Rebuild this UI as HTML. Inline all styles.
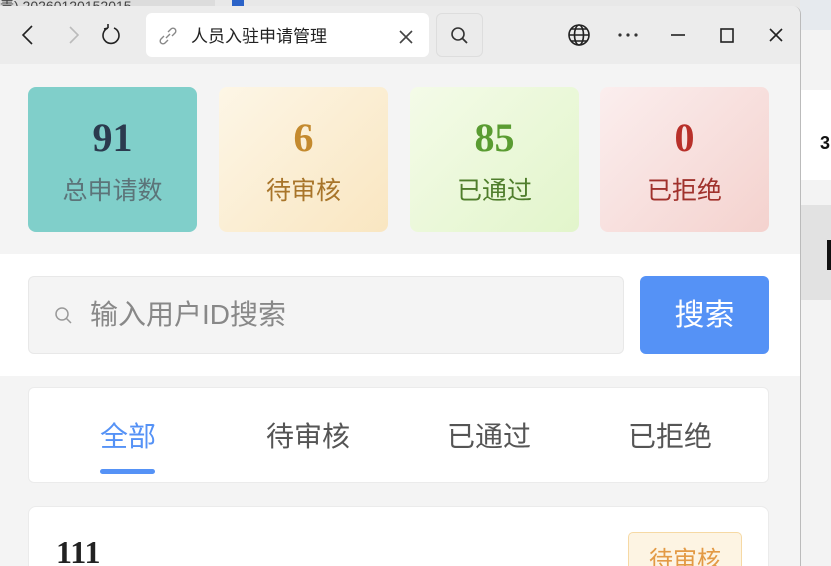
<!DOCTYPE html><html><head><meta charset="utf-8"><style>
*{margin:0;padding:0;box-sizing:border-box}
html{overflow:hidden;width:831px;height:566px}
body{width:831px;height:566px;overflow:hidden;background:#e8e8e8;font-family:"Liberation Sans","Noto Sans CJK SC",sans-serif;position:relative}
.a{position:absolute}
.cj{font-family:"Liberation Sans","Noto Sans CJK SC",sans-serif}
.num{font-family:"Liberation Serif","Noto Serif CJK SC",serif;font-weight:bold}
.card{position:absolute;top:87px;width:169px;height:145px;border-radius:8px;text-align:center}
.card .n{position:absolute;left:0;right:0;font-size:40px;line-height:1;top:31px}
.card .l{position:absolute;left:0;right:0;top:88px;font-size:25px;line-height:32px}
.tab{position:absolute;top:418px;font-size:28px;line-height:38px;color:#555;transform:translateX(-50%)}
</style></head><body>
<div class="a" style="left:0;top:0;width:215px;height:12px;background:#dcdcdc;color:#444;font-size:14px;line-height:12px;overflow:hidden">责) 20260120152015</div>
<div class="a" style="left:232px;top:0;width:12px;height:8px;background:#2b63c8"></div>
<div class="a" style="left:800px;top:0;width:31px;height:566px;background:#f3f3f3"></div>
<div class="a" style="left:800px;top:0;width:31px;height:30px;background:#e6eaee"></div>
<div class="a" style="left:800px;top:90px;width:31px;height:90px;background:#fff"></div>
<div class="a" style="left:820px;top:133px;font-size:18px;font-weight:bold;color:#111">3</div>
<div class="a" style="left:800px;top:205px;width:31px;height:95px;background:#e2e2e2"></div>
<div class="a" style="left:827px;top:240px;width:4px;height:30px;background:#111"></div>
<div class="a" style="left:0;top:6px;width:801px;height:560px;background:#f4f4f4;border-radius:0 8px 0 0;border-right:1px solid #bbb;overflow:hidden">
 <div class="a" style="left:0;top:0;width:800px;height:58px;background:#ececec"></div>
</div>
<svg class="a" style="left:0;top:0" width="800" height="64">
 <g fill="none" stroke="#222" stroke-width="1.6">
 <path d="M32 26 L23 35 L32 44"/>
 <path d="M70 27 L78 35 L70 43" stroke="#bbb"/>
 <path d="M108 28 A8 8 0 1 0 114 28 M108 28 L108 24 M108 28 L104 29"/>
 <circle cx="579" cy="35" r="10"/><ellipse cx="579" cy="35" rx="4.5" ry="10"/><path d="M569 35 H589 M571 29 H587 M571 41 H587"/>
 <path d="M671 35 H685"/><rect x="721" y="29" width="12" height="13"/><path d="M770 29 L782 41 M782 29 L770 41"/>
 </g>
 <g fill="#333"><circle cx="620" cy="35" r="1.6"/><circle cx="628" cy="35" r="1.6"/><circle cx="636" cy="35" r="1.6"/></g>
</svg>
<div class="a" style="left:146px;top:13px;width:283px;height:44px;background:#fff;border-radius:6px"></div>
<svg class="a" style="left:158px;top:26px" width="20" height="20"><path d="M8 12 L12 8 M6 10 L3 13 A2.5 2.5 0 0 0 7 17 L10 14 M10 6 L13 3 A2.5 2.5 0 0 1 17 7 L14 10" fill="none" stroke="#888" stroke-width="1.4"/></svg>
<div class="a cj" style="left:191px;top:25px;font-size:17px;line-height:24px;color:#222">人员入驻申请管理</div>
<svg class="a" style="left:398px;top:29px" width="16" height="16"><path d="M2 2 L14 14 M14 2 L2 14" stroke="#444" stroke-width="1.6"/></svg>
<div class="a" style="left:436px;top:13px;width:47px;height:44px;border:1px solid #ddd;border-radius:6px;background:#ebebeb"></div>
<svg class="a" style="left:0;top:0" width="500" height="64"><circle cx="458" cy="34" r="6" fill="none" stroke="#333" stroke-width="1.6"/><path d="M462 38 L467 43" stroke="#333" stroke-width="1.8"/></svg>

<div class="card" style="left:28px;background:#80cfca"><div class="n num" style="color:#2b3a4e">91</div><div class="l" style="color:#5c7479">总申请数</div></div>
<div class="card" style="left:219px;background:linear-gradient(135deg,#fdf6e6,#f9e6c1)"><div class="n num" style="color:#c48a2e">6</div><div class="l" style="color:#a8752a">待审核</div></div>
<div class="card" style="left:410px;background:linear-gradient(135deg,#f4fbe8,#e2f5cb)"><div class="n num" style="color:#5a9c32">85</div><div class="l" style="color:#4f7e2c">已通过</div></div>
<div class="card" style="left:600px;background:linear-gradient(135deg,#fbeeee,#f4d2ce)"><div class="n num" style="color:#b8302a">0</div><div class="l" style="color:#a0312c">已拒绝</div></div>

<div class="a" style="left:0;top:254px;width:800px;height:122px;background:#fff"></div>
<div class="a" style="left:28px;top:276px;width:596px;height:78px;background:#f4f4f4;border:1px solid #e8e8e8;border-radius:6px"></div>
<svg class="a" style="left:54px;top:306px" width="20" height="20"><circle cx="8" cy="8" r="6" fill="none" stroke="#999" stroke-width="1.5"/><path d="M12.5 12.5 L17 17" stroke="#999" stroke-width="1.5"/></svg>
<div class="a" style="left:90px;top:296px;font-size:28px;line-height:38px;color:#888">输入用户ID搜索</div>
<div class="a" style="left:640px;top:276px;width:129px;height:78px;background:#5592f6;border-radius:6px;color:#fff;font-size:30px;line-height:80px;text-align:center">搜索</div>

<div class="a" style="left:28px;top:387px;width:741px;height:96px;background:#fff;border:1px solid #ebebeb;border-radius:6px"></div>
<div class="tab" style="left:128px;color:#5592f6">全部</div>
<div class="tab" style="left:308px">待审核</div>
<div class="tab" style="left:489px">已通过</div>
<div class="tab" style="left:670px">已拒绝</div>
<div class="a" style="left:100px;top:469px;width:55px;height:5px;border-radius:3px;background:#5592f6"></div>

<div class="a" style="left:28px;top:506px;width:741px;height:60px;background:#fff;border:1px solid #ebebeb;border-bottom:none;border-radius:8px 8px 0 0"></div>
<div class="a num" style="left:56px;top:533px;font-size:32px;line-height:38px;color:#222">111</div>
<div class="a" style="left:628px;top:532px;width:114px;height:34px;background:#fdf4e3;border:1px solid #f6d9a4;border-bottom:none;border-radius:5px 5px 0 0;color:#e39a45;font-size:24px;line-height:56px;text-align:center;overflow:hidden">待审核</div>
</body></html>
